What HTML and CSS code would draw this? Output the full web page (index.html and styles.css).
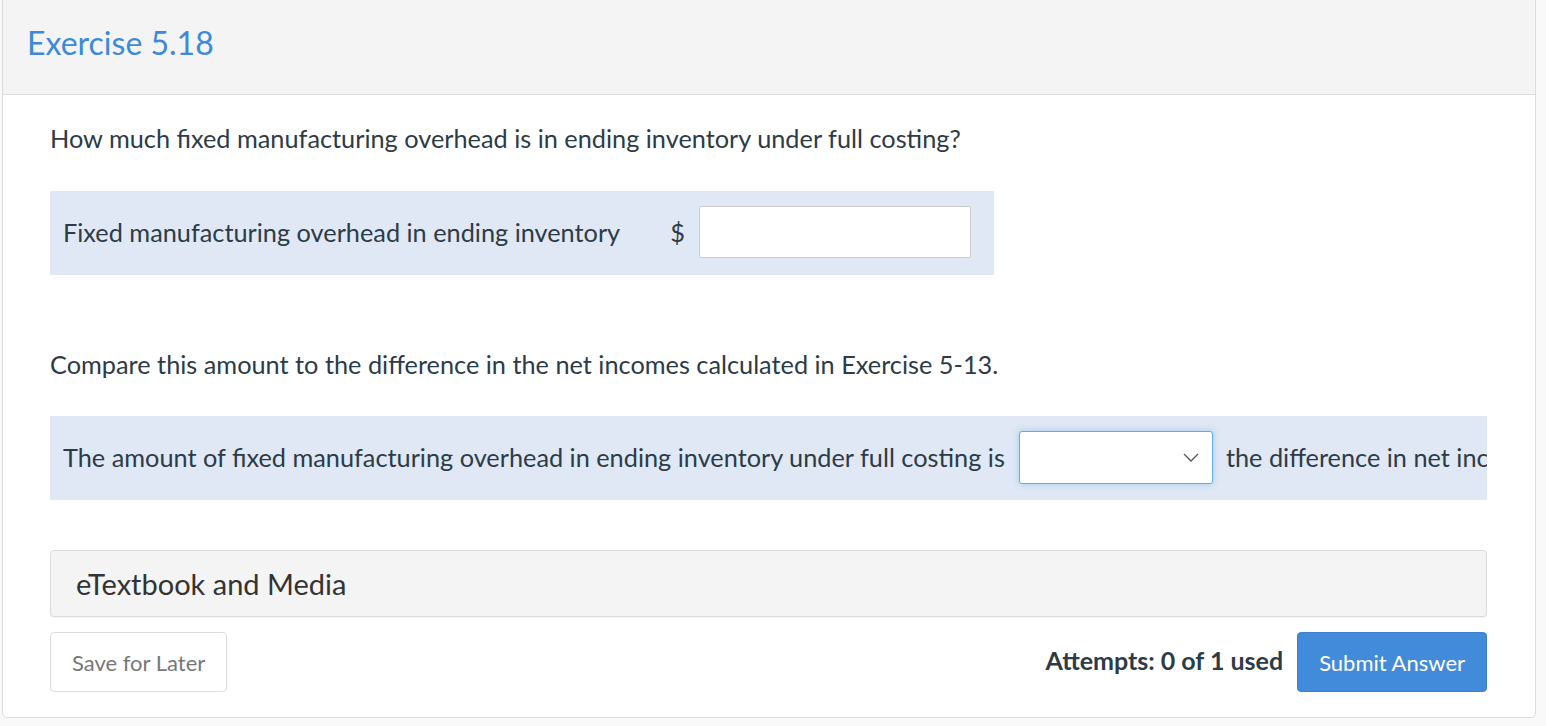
FILE: index.html
```html
<!DOCTYPE html>
<html lang="en">
<head>
    <meta charset="UTF-8">
    <title>Exercise 5.18</title>
    <link rel="stylesheet" href="styles.css">
</head>
<body>
    <div class="panel">
        <div class="panel-heading">
            <h2 class="title">Exercise 5.18</h2>
        </div>

        <div class="panel-body">
            <p class="question">How much fixed manufacturing overhead is in ending inventory under full costing?</p>

            <div class="answer-row short">
                <span class="answer-label">Fixed manufacturing overhead in ending inventory</span>
                <span class="currency">$</span>
                <input type="text" class="answer-input">
            </div>

            <p class="question second">Compare this amount to the difference in the net incomes calculated in Exercise 5-13.</p>

            <div class="answer-row wide">
                <span class="answer-label">The amount of fixed manufacturing overhead in ending inventory under full costing is</span>
                <div class="select-box">
                    <svg class="chevron" width="16" height="9" viewBox="0 0 16 9">
                        <path d="M1 1 L8 8 L15 1" fill="none" stroke="#555" stroke-width="1.3"/>
                    </svg>
                </div>
                <span class="answer-label">the difference in net incomes calculated in Exercise 5-13.</span>
            </div>

            <div class="media-bar">eTextbook and Media</div>

            <div class="controls">
                <button class="btn btn-save">Save for Later</button>
                <div class="submit-group">
                    <span class="attempts">Attempts: 0 of 1 used</span>
                    <button class="btn btn-submit">Submit Answer</button>
                </div>
            </div>
        </div>
    </div>
</body>
</html>
```

FILE: styles.css
```css
* {
    margin: 0;
    padding: 0;
    box-sizing: border-box;
}

body {
    font-family: Lato, "Open Sans", sans-serif;
    color: #2d3b48;
    background-color: #f9f9f9;
    overflow: hidden;
}

/* Panel */
.panel {
    width: 1534px;
    margin: -1px 0 0 2px;
    background: white;
    border: 1px solid #dcdcdc;
    border-radius: 0 0 5px 5px;
}

.panel-heading {
    height: 95px;
    background: #f4f4f4;
    border-bottom: 1px solid #dcdcdc;
    padding: 0 24px 10px;
    display: flex;
    align-items: center;
}

.title {
    font-size: 32px;
    font-weight: normal;
    color: #3d8ad9;
}

.panel-body {
    padding: 25px 48px 25px 47px;
}

.question {
    font-size: 25.3px;
    line-height: 36px;
    margin-bottom: 35px;
}

.question.second {
    margin-top: 71px;
    margin-bottom: 34px;
}

/* Answer rows */
.answer-row {
    height: 84px;
    background: #dfe8f4;
    display: flex;
    align-items: center;
    padding: 0 13px 2px;
    font-size: 25.3px;
    white-space: nowrap;
    overflow: hidden;
}

.answer-row.short {
    width: 944px;
}

.currency {
    margin-left: 50px;
    margin-right: 14px;
}

.answer-input {
    width: 272px;
    height: 52px;
    border: 1px solid #ccc;
    border-radius: 2px;
    background: white;
}

.select-box {
    flex-shrink: 0;
    width: 194px;
    height: 53px;
    margin: 0 13px 0 14px;
    background: white;
    border: 1px solid #66a8ee;
    border-radius: 3px;
    box-shadow: 0 0 6px rgba(102, 168, 238, 0.5);
    display: flex;
    align-items: center;
    justify-content: flex-end;
    padding-right: 13px;
}

/* eTextbook bar */
.media-bar {
    margin-top: 50px;
    height: 67px;
    background: #f4f4f4;
    border: 1px solid #dcdcdc;
    border-radius: 4px;
    padding-left: 25px;
    display: flex;
    align-items: center;
    font-size: 29px;
    color: #333;
    box-shadow: 0 1px 1px rgba(0, 0, 0, 0.05);
}

/* Footer controls */
.controls {
    display: flex;
    justify-content: space-between;
    align-items: center;
    margin-top: 15px;
}

.submit-group {
    display: flex;
    align-items: center;
    gap: 14px;
}

.attempts {
    font-size: 25px;
    font-weight: bold;
    margin-bottom: 5px;
}

.btn {
    height: 60px;
    padding: 0 21px;
    border-radius: 4px;
    font-family: inherit;
    font-size: 22px;
}

.btn-save {
    background: white;
    color: #777;
    border: 1px solid #dcdcdc;
}

.btn-submit {
    background: #428bdb;
    color: white;
    border: 1px solid #3b80cc;
}
```
